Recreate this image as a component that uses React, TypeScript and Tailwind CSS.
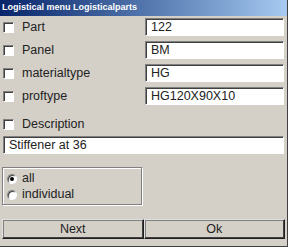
import React from "react"

const FIELDS = [
  { label: "Part", value: "122" },
  { label: "Panel", value: "BM" },
  { label: "materialtype", value: "HG" },
  { label: "proftype", value: "HG120X90X10" },
]

function Check() {
  return (
    <span className="block w-[11px] h-[11px] bg-white border-t border-l border-t-[#808080] border-l-[#808080] border-b border-r border-b-white border-r-white shadow-[inset_1px_1px_0_#404040]" />
  )
}

function Field({ value, className = "" }: { value: string; className?: string }) {
  return (
    <div className={`h-[18px] bg-white border-t border-l border-[#808080] border-b-white border-r-white border-b border-r shadow-[inset_1px_1px_0_#404040] flex items-center pl-[5px] text-[12.5px] text-[#222] ${className}`}>
      {value}
    </div>
  )
}

function Radio({ checked }: { checked?: boolean }) {
  return (
    <span className="relative block w-[10px] h-[10px] rounded-full bg-white border border-t-[#808080] border-l-[#808080] border-b-white border-r-white shadow-[inset_1px_1px_0_#404040]">
      {checked && <span className="absolute left-[2px] top-[2px] w-[4px] h-[4px] rounded-full bg-black" />}
    </span>
  )
}

function Button({ label }: { label: string }) {
  return (
    <button className="flex-1 h-[20px] bg-[#d4d0c8] border border-t-[#e0e0e0] border-l-[#e0e0e0] border-b-[#202020] border-r-[#202020] shadow-[inset_-1px_-1px_0_#404040,inset_1px_1px_0_#808080] text-[12.5px] text-[#222] flex items-center justify-center">
      {label}
    </button>
  )
}

export default function App() {
  return (
    <div
      className="w-[288px] h-[247px] bg-[#d4d0c8] flex flex-col border-b border-r border-[#404040] overflow-hidden"
      style={{ fontFamily: '"Liberation Sans", Arial, sans-serif' }}
    >
      {/* title */}
      <div className="h-[16px] bg-gradient-to-r from-[#0a246a] to-[#a6caf0] flex items-center pl-[2px]">
        <span className="text-white font-bold text-[9px]">Logistical menu Logisticalparts</span>
      </div>

      <div className="flex flex-col pt-[2px] pl-[3px] pr-[3px]">
        <div className="flex flex-col gap-[5px]">
          {FIELDS.map((f) => (
            <div key={f.label} className="flex items-center h-[18px]">
              <Check />
              <span className="ml-[8px] text-[12.5px] text-[#222] w-[123px]">{f.label}</span>
              <Field value={f.value} className="flex-1" />
            </div>
          ))}
        </div>

        <div className="flex items-center h-[18px] mt-[10px]">
          <Check />
          <span className="ml-[8px] text-[12.5px] text-[#222]">Description</span>
        </div>

        <Field value="Stiffener at 36" className="mt-[3px]" />

        <div className="mt-[13px] w-[141px] h-[39px] -ml-[1px] border border-t-[#808080] border-l-[#808080] border-b-white border-r-white shadow-[inset_-1px_-1px_0_#808080,inset_1px_1px_0_#fff] flex flex-col justify-center gap-[2px] pl-[4px]">
          <div className="flex items-center gap-[5px] h-[14px]">
            <Radio checked />
            <span className="text-[12.5px] text-[#222]">all</span>
          </div>
          <div className="flex items-center gap-[5px] h-[14px]">
            <Radio />
            <span className="text-[12.5px] text-[#222]">individual</span>
          </div>
        </div>
      </div>

      <div className="flex mt-[13px] px-[2px]">
        <Button label="Next" />
        <Button label="Ok" />
      </div>
    </div>
  )
}
